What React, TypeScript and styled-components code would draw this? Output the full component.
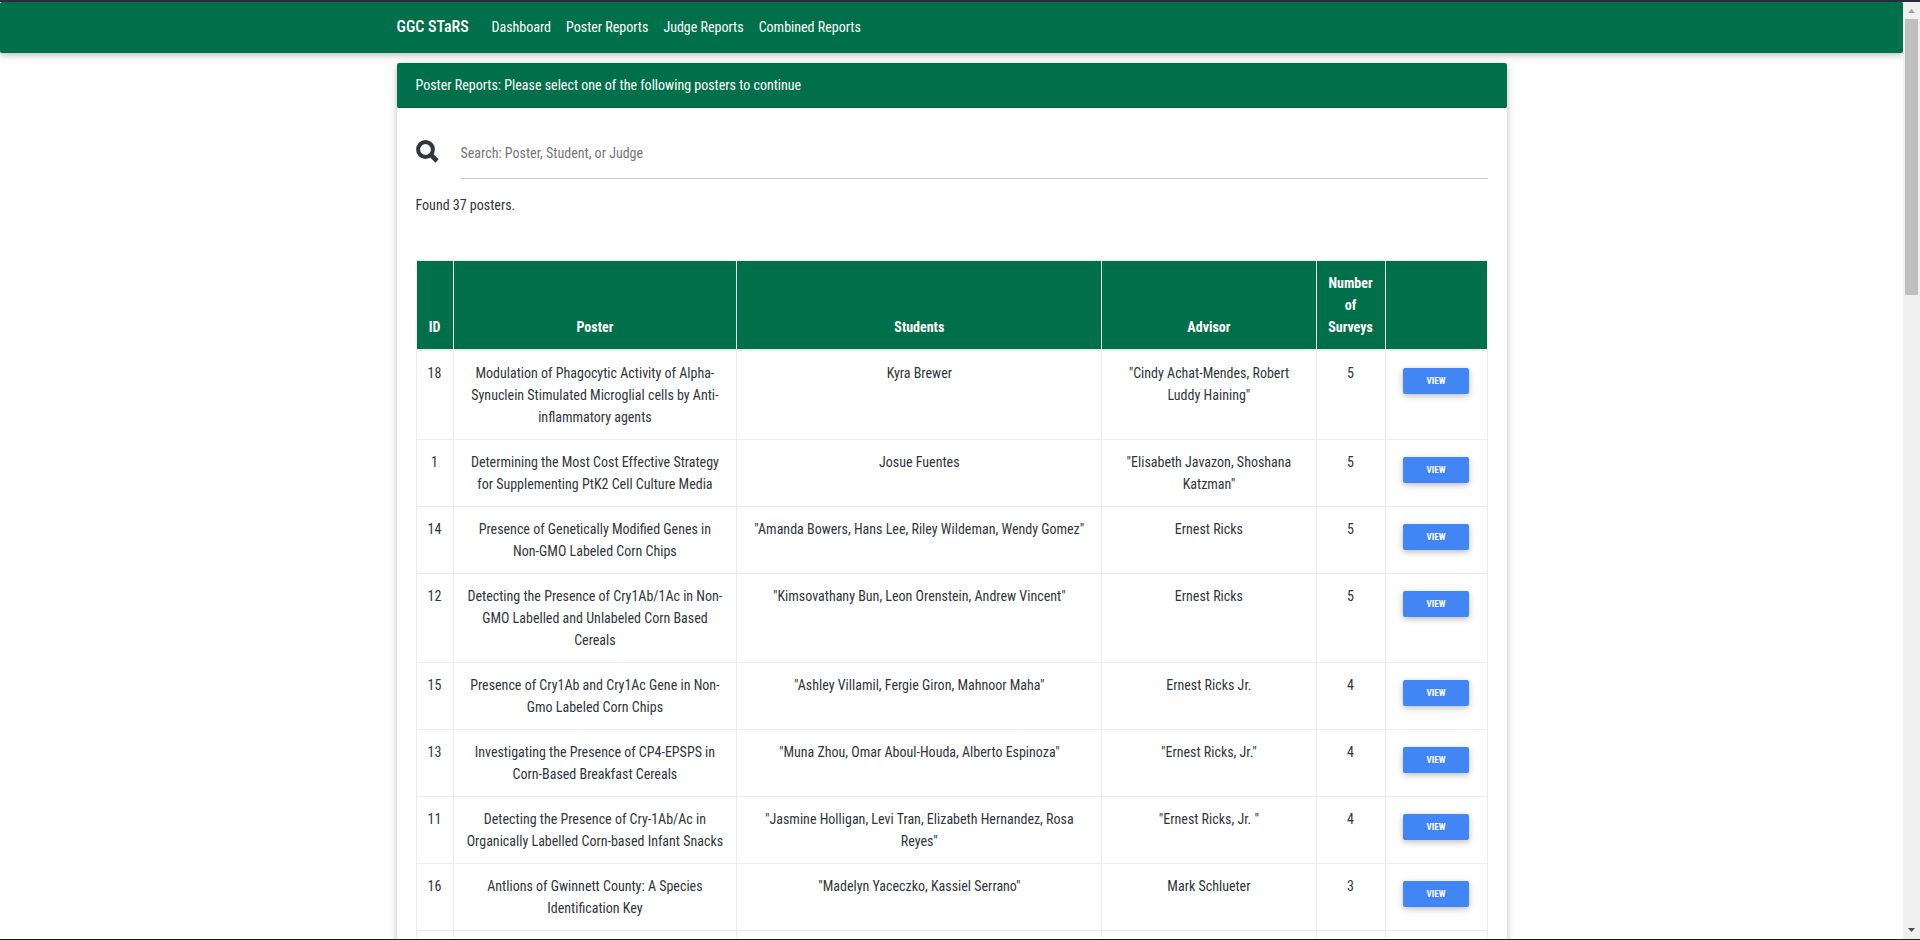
import React from "react";
import styled, { createGlobalStyle } from "styled-components";

const GREEN = "#00704a";
const INK = "#30363c";
const LINE = "#ececec";
const SHADOW = "0 2px 5px 0 rgba(0, 0, 0, 0.16), 0 2px 10px 0 rgba(0, 0, 0, 0.12)";

const GlobalStyle = createGlobalStyle`
  *, *::before, *::after { box-sizing: border-box; }
  body {
    margin: 0;
    background: #fefefe;
    color: ${INK};
    font-family: "Roboto Condensed", Roboto, "Liberation Sans", sans-serif;
    font-size: 14px;
    line-height: 22px;
  }
`;

const Frame = styled.div`
  display: flex;
  height: 100vh;
  overflow: hidden;
  border-top: 2px solid #282d38;
  border-bottom: 1px solid #1e1e1e;
`;

const Page = styled.div`
  flex: 1;
  min-width: 0;
  overflow: hidden;
`;

const Container = styled.div`
  width: 100%;
  max-width: 1110px;
  margin: 0 auto;
`;

const Navbar = styled.nav`
  background: ${GREEN};
  border-radius: 2px;
  box-shadow: ${SHADOW};
  margin-bottom: 10px;
`;

const NavRow = styled(Container)`
  display: flex;
  align-items: center;
  height: 51px;
  padding-bottom: 2px;
`;

const Brand = styled.a`
  width: 95px;
  color: #fff;
  font-size: 16px;
  font-weight: 500;
  text-decoration: none;
  white-space: nowrap;
`;

const NavList = styled.ul`
  display: flex;
  gap: 15px;
  margin: 0;
  padding: 0;
  list-style: none;
`;

const NavLink = styled.a`
  color: #fff;
  text-decoration: none;
  white-space: nowrap;
`;

const Card = styled(Container)`
  background: #fff;
  border-radius: 2px;
  box-shadow: ${SHADOW};
`;

const CardHeader = styled.h1`
  margin: 0;
  padding: 11px 19px;
  border-bottom: 1px solid #00633f;
  border-radius: 2px;
  background: ${GREEN};
  color: #fff;
  font-size: 14px;
  font-weight: 400;
`;

const CardBody = styled.div`
  padding: 18px 19px;
`;

const SearchRow = styled.label`
  display: flex;
  align-items: flex-start;
  gap: 22px;
`;

const SearchIcon = styled.svg`
  flex: none;
  width: 23px;
  height: 23px;
  margin-top: 14px;
`;

const SearchInput = styled.input`
  flex: 1;
  min-width: 0;
  height: 53px;
  padding: 2px 0 0;
  border: 0;
  border-bottom: 1px solid #c8c8c8;
  outline: 0;
  background: transparent;
  color: ${INK};
  font: inherit;

  &::placeholder {
    color: #757575;
    opacity: 1;
  }
`;

const Found = styled.p`
  margin: 15px 0 44px;
`;

const Table = styled.table`
  width: 100%;
  table-layout: fixed;
  border-collapse: collapse;
  text-align: center;
`;

const Col = styled.col<{ $width?: string }>`
  width: ${({ $width }) => $width ?? "auto"};
`;

const Th = styled.th`
  padding: 11px 8px;
  border: 1px solid ${LINE};
  border-bottom-width: 2px;
  background: ${GREEN};
  color: #fff;
  font-weight: 700;
  vertical-align: bottom;
`;

const Td = styled.td`
  height: 67px;
  padding: 11px;
  border: 1px solid ${LINE};
  vertical-align: top;
`;

const ViewButton = styled.button`
  display: block;
  width: 66px;
  height: 26px;
  margin: 6px auto;
  padding: 0;
  border: 0;
  border-radius: 2px;
  background: #4285f4;
  box-shadow: ${SHADOW};
  color: #fff;
  font-family: inherit;
  font-size: 9px;
  font-weight: 700;
  text-transform: uppercase;
  cursor: pointer;
`;

const ScrollTrack = styled.div`
  display: flex;
  flex: none;
  flex-direction: column;
  width: 17px;
  background: #f0f0f0;
`;

const ScrollThumb = styled.div`
  height: 276px;
  margin: 0 2px auto;
  background: #bfbfbf;
`;

const ScrollArrow = styled.svg`
  flex: none;
  width: 17px;
  height: 17px;
`;

const links = ["Dashboard", "Poster Reports", "Judge Reports", "Combined Reports"];

const headings = ["ID", "Poster", "Students", "Advisor", "Number of Surveys", ""];

type Poster = { id: number; title: string; students: string; advisor: string; surveys: number };

const posters: Poster[] = [
  { id: 18, title: "Modulation of Phagocytic Activity of Alpha-Synuclein Stimulated Microglial cells by Anti-inflammatory agents", students: "Kyra Brewer", advisor: "\"Cindy Achat-Mendes, Robert Luddy Haining\"", surveys: 5 },
  { id: 1, title: "Determining the Most Cost Effective Strategy for Supplementing PtK2 Cell Culture Media", students: "Josue Fuentes", advisor: "\"Elisabeth Javazon, Shoshana Katzman\"", surveys: 5 },
  { id: 14, title: "Presence of Genetically Modified Genes in Non-GMO Labeled Corn Chips", students: "\"Amanda Bowers, Hans Lee, Riley Wildeman, Wendy Gomez\"", advisor: "Ernest Ricks", surveys: 5 },
  { id: 12, title: "Detecting the Presence of Cry1Ab/1Ac in Non-GMO Labelled and Unlabeled Corn Based Cereals", students: "\"Kimsovathany Bun, Leon Orenstein, Andrew Vincent\"", advisor: "Ernest Ricks", surveys: 5 },
  { id: 15, title: "Presence of Cry1Ab and Cry1Ac Gene in Non-Gmo Labeled Corn Chips", students: "\"Ashley Villamil, Fergie Giron, Mahnoor Maha\"", advisor: "Ernest Ricks Jr.", surveys: 4 },
  { id: 13, title: "Investigating the Presence of CP4-EPSPS in Corn-Based Breakfast Cereals", students: "\"Muna Zhou, Omar Aboul-Houda, Alberto Espinoza\"", advisor: "\"Ernest Ricks, Jr.\"", surveys: 4 },
  { id: 11, title: "Detecting the Presence of Cry-1Ab/Ac in Organically Labelled Corn-based Infant Snacks", students: "\"Jasmine Holligan, Levi Tran, Elizabeth Hernandez, Rosa Reyes\"", advisor: "\"Ernest Ricks, Jr. \"", surveys: 4 },
  { id: 16, title: "Antlions of Gwinnett County: A Species Identification Key", students: "\"Madelyn Yaceczko, Kassiel Serrano\"", advisor: "Mark Schlueter", surveys: 3 },
];

export default function App() {
  return (
    <>
      <GlobalStyle />
      <Frame>
        <Page>
          <Navbar>
            <NavRow>
              <Brand href="#">GGC STaRS</Brand>
              <NavList>
                {links.map((label) => (
                  <li key={label}>
                    <NavLink href="#">{label}</NavLink>
                  </li>
                ))}
              </NavList>
            </NavRow>
          </Navbar>
          <Card as="main">
            <CardHeader>Poster Reports: Please select one of the following posters to continue</CardHeader>
            <CardBody>
              <SearchRow>
                <SearchIcon viewBox="0 0 23 23" aria-hidden="true">
                  <circle cx="9.5" cy="9.5" r="7.4" fill="none" stroke={INK} strokeWidth="4" />
                  <path d="M14.6 14.6 L21 21" stroke={INK} strokeWidth="4.6" />
                </SearchIcon>
                <SearchInput type="text" aria-label="Search" placeholder="Search: Poster, Student, or Judge" />
              </SearchRow>
              <Found>Found 37 posters.</Found>
              <Table>
                <colgroup>
                  <Col $width="37px" />
                  <Col $width="26.5%" />
                  <Col />
                  <Col $width="20%" />
                  <Col $width="69px" />
                  <Col $width="102px" />
                </colgroup>
                <thead>
                  <tr>
                    {headings.map((label) => (
                      <Th key={label} scope="col">{label}</Th>
                    ))}
                  </tr>
                </thead>
                <tbody>
                  {posters.map((poster) => (
                    <tr key={poster.id}>
                      <Td>{poster.id}</Td>
                      <Td>{poster.title}</Td>
                      <Td>{poster.students}</Td>
                      <Td>{poster.advisor}</Td>
                      <Td>{poster.surveys}</Td>
                      <Td><ViewButton type="button">View</ViewButton></Td>
                    </tr>
                  ))}
                  <tr>
                    <Td /><Td /><Td /><Td /><Td /><Td />
                  </tr>
                </tbody>
              </Table>
            </CardBody>
          </Card>
        </Page>
        <ScrollTrack aria-hidden="true">
          <ScrollArrow viewBox="0 0 17 17">
            <path d="M5 11 L8.5 7 L12 11 Z" fill="#a3a3a3" />
          </ScrollArrow>
          <ScrollThumb />
          <ScrollArrow viewBox="0 0 17 17">
            <path d="M5 6 L12 6 L8.5 10 Z" fill="#505050" />
          </ScrollArrow>
        </ScrollTrack>
      </Frame>
    </>
  );
}
